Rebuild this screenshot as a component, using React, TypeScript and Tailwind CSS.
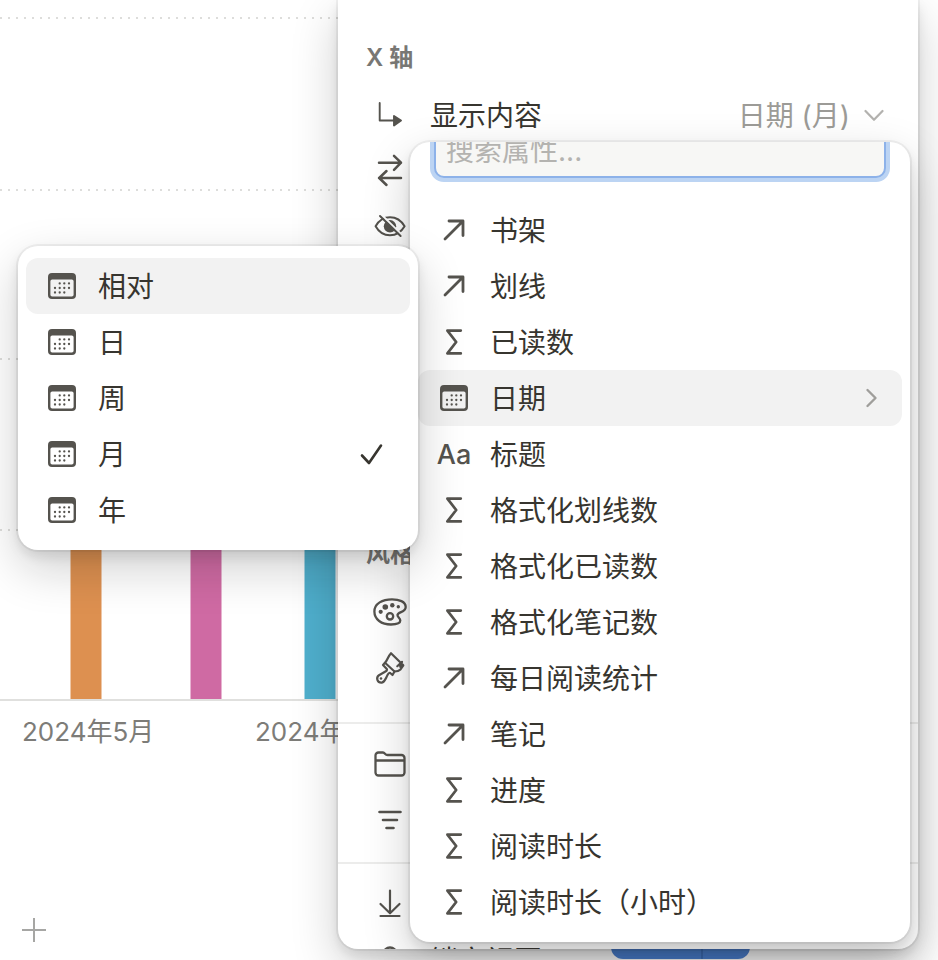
import React from "react";

type IconProps = { children: React.ReactNode; w?: string };

function Icon({ children, w = "2.6" }: IconProps) {
  return (
    <svg
      className="size-8 shrink-0 overflow-visible text-[#55534e]"
      viewBox="0 0 32 32"
      fill="none"
      stroke="currentColor"
      strokeWidth={w}
      strokeLinecap="round"
      strokeLinejoin="round"
      aria-hidden="true"
    >
      {children}
    </svg>
  );
}

const calendarDots = [
  [13.7, 13.4], [18.3, 13.4], [23, 13.4],
  [9, 18], [13.7, 18], [18.3, 18], [23, 18],
  [9, 22.5], [13.7, 22.5], [18.3, 22.5],
];

function CalendarIcon() {
  return (
    <Icon>
      <path
        d="M6 3H26A4 4 0 0 1 30 7V25A4 4 0 0 1 26 29H6A4 4 0 0 1 2 25V7A4 4 0 0 1 6 3ZM6.2 9.5A1.8 1.8 0 0 0 4.4 11.3V24.8A1.8 1.8 0 0 0 6.2 26.6H25.8A1.8 1.8 0 0 0 27.6 24.8V11.3A1.8 1.8 0 0 0 25.8 9.5Z"
        fill="currentColor"
        fillRule="evenodd"
        stroke="none"
      />
      {calendarDots.map(([x, y]) => (
        <circle key={`${x}-${y}`} cx={x} cy={y} r="1.15" fill="currentColor" stroke="none" />
      ))}
    </Icon>
  );
}

function ArrowIcon() {
  return (
    <Icon w="2.8">
      <path d="M7 25L25 7M11 7H25V21.5" />
    </Icon>
  );
}

function SigmaIcon() {
  return (
    <Icon w="2.7">
      <path d="M22.8 4.6H9.4L18.2 16L9.4 27.4H22.8" />
    </Icon>
  );
}

function TextIcon() {
  return (
    <span className="flex w-8 shrink-0 justify-center pt-0.5 text-[27px] font-medium text-[#55534e]" aria-hidden="true">
      Aa
    </span>
  );
}

type Kind = "relation" | "formula" | "date" | "text";

const kindIcon: Record<Kind, () => React.ReactElement> = {
  relation: ArrowIcon,
  formula: SigmaIcon,
  date: CalendarIcon,
  text: TextIcon,
};

const properties: { kind: Kind; label: string }[] = [
  { kind: "relation", label: "书架" },
  { kind: "relation", label: "划线" },
  { kind: "formula", label: "已读数" },
  { kind: "date", label: "日期" },
  { kind: "text", label: "标题" },
  { kind: "formula", label: "格式化划线数" },
  { kind: "formula", label: "格式化已读数" },
  { kind: "formula", label: "格式化笔记数" },
  { kind: "relation", label: "每日阅读统计" },
  { kind: "relation", label: "笔记" },
  { kind: "formula", label: "进度" },
  { kind: "formula", label: "阅读时长" },
  { kind: "formula", label: "阅读时长（小时）" },
];

const intervals = ["相对", "日", "周", "月", "年"];

function MenuItem({
  icon,
  label,
  active,
  children,
}: {
  icon: React.ReactNode;
  label: string;
  active?: boolean;
  children?: React.ReactNode;
}) {
  return (
    <button
      type="button"
      role="menuitem"
      className={`flex h-14 w-full items-center gap-5 rounded-xl px-5 text-left ${active ? "bg-[#f2f2f2]" : ""}`}
    >
      {icon}
      <span className="grow pt-0.5 whitespace-nowrap">{label}</span>
      {children}
    </button>
  );
}

function SettingRow({ icon, label, children }: { icon: React.ReactNode; label?: string; children?: React.ReactNode }) {
  return (
    <div className="flex h-14 items-center gap-6 pr-[34px] pl-9">
      {icon}
      <span className="grow pt-0.5">{label}</span>
      {children}
    </div>
  );
}

function Chart() {
  return (
    <section className="mr-10 overflow-hidden">
      <svg className="block h-[702px] w-full" aria-label="图表" role="img">
        {[18, 190, 359, 530].map((y) => (
          <line key={y} x1="0" x2="100%" y1={y} y2={y} stroke="#dddddb" strokeWidth="2" strokeDasharray="2 6" />
        ))}
        <rect x="70.5" y="420" width="31" height="280" fill="#dd9050" />
        <rect x="190.5" y="420" width="31" height="280" fill="#cf6aa3" />
        <rect x="304.5" y="420" width="31" height="280" fill="#4fafcd" />
        <line x1="0" x2="100%" y1="700" y2="700" stroke="#e0e0de" strokeWidth="2" />
      </svg>
      <div className="flex pt-3.5 pl-[22px] text-[26px] leading-8 text-[#7d7c78]">
        <span className="w-[233px] shrink-0">2024年5月</span>
        <span className="w-[233px] shrink-0">2024年7月</span>
      </div>
    </section>
  );
}

function SettingsPanel() {
  return (
    <div className="absolute inset-0 overflow-hidden rounded-b-[20px] bg-white shadow-[0_0_0_2px_rgba(15,15,15,0.05),0_6px_12px_rgba(15,15,15,0.1),0_18px_48px_rgba(15,15,15,0.2)]">
      <h2 className="pt-[42px] pl-7 text-2xl leading-8 font-semibold text-[#787774]">X 轴</h2>
      <div className="pt-[13px]">
        <SettingRow
          icon={
            <Icon w="1.9">
              <path d="M5.7 4V21.5H20" />
              <path d="M20 17L27 21.5L20 26.5Z" fill="currentColor" />
            </Icon>
          }
          label="显示内容"
        >
          <button type="button" className="flex items-center gap-3.5 whitespace-nowrap text-[#9c9b97]">
            <span className="pt-0.5">日期 (月)</span>
            <svg className="h-5 w-5" viewBox="0 0 20 20" fill="none" stroke="#b3b2af" strokeWidth="2.2" strokeLinecap="round" strokeLinejoin="round" aria-hidden="true">
              <path d="M1.5 6L10 14.8L18.5 6" />
            </svg>
          </button>
        </SettingRow>
        <SettingRow
          icon={
            <Icon w="2.5">
              <path d="M5 7.7H27M20 .8L27 7.7L20 14.8M27 23H5M12.5 16L5.2 23L12.5 30" />
            </Icon>
          }
        />
        <SettingRow
          icon={
            <Icon w="2">
              <path d="M1.6 15.3C5 9.2 10.5 6.3 16 6.3S27 9.2 30.6 15.3C27 21.4 21.5 24.3 16 24.3S5 21.4 1.6 15.3Z" />
              <circle cx="16" cy="15.3" r="6.2" fill="currentColor" stroke="none" />
              <path d="M7.5 3.8L28 24" stroke="white" strokeWidth="2" />
              <path d="M6 5L26.6 25" />
            </Icon>
          }
        />
      </div>
      <h2 className="pt-[283px] pb-3.5 pl-7 text-2xl leading-8 font-semibold text-[#787774]">风格</h2>
      <SettingRow
        icon={
          <Icon w="2.3">
            <path d="M18 3.3C25 3.3 31.7 5.6 31.7 11C31.7 16.5 24 15.5 23.5 19C23.3 21.2 26.3 21.7 26.3 24.6C26.3 27.5 22 28.5 17 28.5C7.5 28.5 .4 23.5 .4 15.5C.4 7.5 8.5 3.3 18 3.3Z" />
            <circle cx="16" cy="20.3" r="3.2" />
            <g fill="currentColor" stroke="none">
              <circle cx="11.3" cy="11" r="2.8" />
              <circle cx="18.3" cy="9.2" r="2.2" />
              <circle cx="24.3" cy="10.8" r="1.7" />
              <circle cx="6.7" cy="15.8" r="2.1" />
            </g>
          </Icon>
        }
      />
      <SettingRow
        icon={
          <Icon w="2.2">
            <path d="M17 1.2L29.3 13.3L26.5 17.5C24.5 19.5 22.5 19.5 20.5 19.5L11 10.8C13.5 8.5 13.8 4.5 17 1.2ZM23.3 14.2L28 9.8L26.2 14.8" />
            <path d="M11 10.8L9 13L12.8 17C13.5 18 12.5 19 11 19.8L5 23.2C1.5 26 3.5 31 7.8 30.6C11 30 11.5 26.500 13.800 22.500C14.800 20.800 15.800 20.500 16.800 21.500L18.500 23L20.500 19.500" />
            <circle cx="7" cy="26.500" r="1.300" fill="currentColor" stroke="none" />
          </Icon>
        }
      />
      <div className="mt-[26px] border-y-2 border-[#ececeb] pt-3 pb-3.5">
        <SettingRow
          icon={
            <Icon w="2.3">
              <path d="M1.5 24.5V7.5A3 3 0 0 1 4.5 4.5H9C11 4.5 11 7 13.5 7H27.5A3 3 0 0 1 30.5 10V24.5A3 3 0 0 1 27.5 27.5H4.5A3 3 0 0 1 1.5 24.5ZM1.5 12.5H30.5" />
            </Icon>
          }
        />
        <SettingRow
          icon={
            <Icon>
              <path d="M5.5 8H26.5M9 16H23M12.5 24H19.5" />
            </Icon>
          }
        />
      </div>
      <div className="pt-3">
        <SettingRow
          icon={
            <Icon w="2.2">
              <path d="M16 2.5V25M6.5 16L16 25.3L25.5 16M6.5 28H25.5" />
            </Icon>
          }
        />
        <SettingRow
          icon={
            <Icon>
              <path d="M10 14V9.500A6 6 0 0 1 22 9.500V14M6 14H26V29H6Z" />
            </Icon>
          }
          label="锁定视图"
        />
      </div>
    </div>
  );
}

function PropertyMenu() {
  return (
    <div className="absolute top-[142px] right-2 w-[500px] overflow-hidden rounded-[20px] bg-white shadow-[0_0_0_2px_rgba(15,15,15,0.05),0_6px_12px_rgba(15,15,15,0.1),0_18px_48px_rgba(15,15,15,0.2)]">
      <div className="-mt-5 px-6">
        <input
          type="text"
          aria-label="搜索属性"
          placeholder="搜索属性..."
          className="block h-14 w-full rounded-[10px] border-2 border-[#8db2e9] bg-[#f7f7f5] px-2.5 pt-0.5 outline-none ring-4 ring-[#bcd4f3] placeholder:text-[#b4b3b0]"
        />
      </div>
      <div role="menu" className="px-2 pt-6 pb-3">
        {properties.map(({ kind, label }) => {
          const Glyph = kindIcon[kind];
          const open = label === "日期";
          return (
            <MenuItem key={label} icon={<Glyph />} label={label} active={open}>
              {open && (
                <svg className="h-5 w-5" viewBox="0 0 20 20" fill="none" stroke="#9f9e9b" strokeWidth="2.4" strokeLinecap="round" strokeLinejoin="round" aria-hidden="true">
                  <path d="M5.500 2L13.500 10L5.500 18" />
                </svg>
              )}
            </MenuItem>
          );
        })}
      </div>
    </div>
  );
}

function IntervalMenu() {
  return (
    <div
      role="menu"
      className="absolute top-[246px] right-[500px] w-[400px] rounded-[20px] bg-white px-2 py-3 shadow-[0_0_0_2px_rgba(15,15,15,0.05),0_6px_12px_rgba(15,15,15,0.1),0_18px_48px_rgba(15,15,15,0.2)]"
    >
      {intervals.map((label, i) => (
        <MenuItem key={label} icon={<CalendarIcon />} label={label} active={i === 0}>
          {label === "月" && (
            <svg className="size-9 text-[#37352f]" viewBox="0 0 36 36" fill="none" stroke="currentColor" strokeWidth="2.6" strokeLinecap="round" strokeLinejoin="round" aria-hidden="true">
              <path d="M8 19.5L15 27L27 9.500" />
            </svg>
          )}
        </MenuItem>
      ))}
    </div>
  );
}

export default function App() {
  return (
    <main className="relative flex h-screen min-h-[960px] flex-col overflow-hidden bg-white font-[Inter,'Noto_Sans_CJK_SC',sans-serif] text-[28px] leading-10 text-[#37352f]">
      <Chart />
      <footer className="mt-auto flex items-center justify-between pr-[188px] pb-px pl-[22px]">
        <button type="button" aria-label="添加">
          <svg className="size-6" viewBox="0 0 24 24" stroke="#a6a6a4" strokeWidth="2" aria-hidden="true">
            <path d="M12 0V24M0 12H24" />
          </svg>
        </button>
        <div className="flex h-[58px] overflow-hidden rounded-xl bg-[#4a80d2]">
          <button type="button" aria-label="新建" className="w-[92px] border-r-2 border-[#3d6fbb]" />
          <button type="button" aria-label="更多" className="w-[47px]" />
        </div>
      </footer>
      <div className="absolute top-0 right-5 bottom-[11px] w-[580px]">
        <SettingsPanel />
        <PropertyMenu />
        <IntervalMenu />
      </div>
    </main>
  );
}
